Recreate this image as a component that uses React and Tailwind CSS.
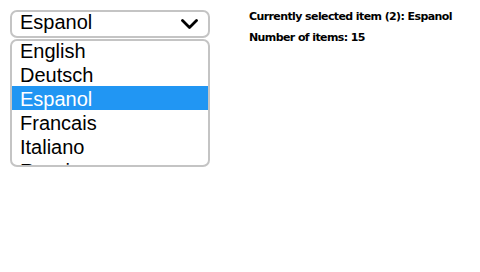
import React from "react";

const items = ["English", "Deutsch", "Espanol", "Francais", "Italiano", "Russian", "Polski", "Nederlands", "Svenska", "Norsk", "Dansk", "Suomi", "Magyar", "Cesky", "Portugues"];

export default function App() {
  const sel = 2;
  return (
    <div className="w-[480px] h-[272px] bg-white flex items-start">
      <div className="ml-[10px] mt-[10px] w-[200px] shrink-0 flex flex-col gap-[1px] font-['Liberation_Sans',Arial,sans-serif] text-black">
        <div className="h-[28px] border-2 border-[#c4c4c4] rounded-[7px] flex items-center justify-between pl-[8px] pr-[9px]">
          <span className="text-[20px] leading-[24px] mb-[4px]">Espanol</span>
          <svg width="18" height="12" viewBox="0 0 18 12">
            <polyline points="1.5,2.5 8.5,9.5 15.5,2.5" fill="none" stroke="#000" strokeWidth="2.8" strokeLinecap="round" strokeLinejoin="round" />
          </svg>
        </div>
        <div className="h-[128px] border-2 border-[#c4c4c4] rounded-[7px] overflow-hidden">
          <div className="flex flex-col -mt-[3px]">
            {items.map((it, i) => (
              <div
                key={it}
                className={
                  "h-[24px] leading-[24px] text-[20px] pl-[8px] pt-[1px] shrink-0 " +
                  (i === sel ? "bg-[#2196f3] text-white" : "")
                }
              >
                {it}
              </div>
            ))}
          </div>
        </div>
      </div>
      <div className="ml-[39px] mt-[10px] shrink-0 whitespace-nowrap flex flex-col gap-[7px] font-['DejaVu_Sans',Verdana,sans-serif] font-bold text-[11px] leading-[14px] tracking-[-0.6px] text-black">
        <div>Currently selected item (2): Espanol</div>
        <div>Number of items: 15</div>
      </div>
    </div>
  );
}
